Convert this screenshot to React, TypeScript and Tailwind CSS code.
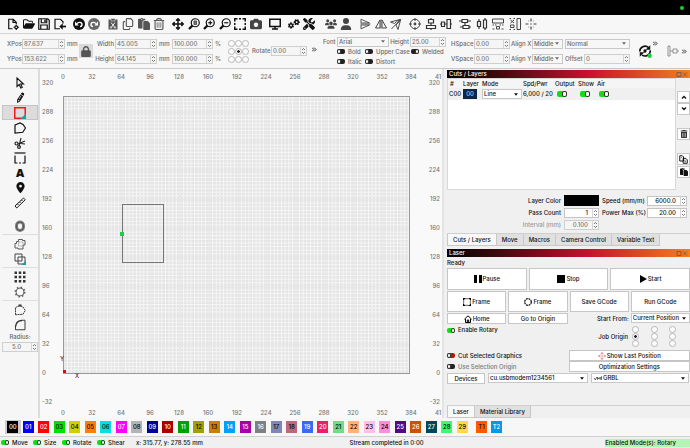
import type { ReactNode } from "react";
import clsx from "clsx";
import {
  FaArrowsUpDownLeftRight,
  FaCamera,
  FaGears,
  FaLocationDot,
  FaLock,
  FaPaste,
  FaPencil,
  FaRegCopy,
  FaRegFolderOpen,
  FaRegTrashCan,
  FaScrewdriverWrench,
  FaTrashCan,
  FaUser,
  FaUsers,
} from "react-icons/fa6";

const swatches = [
  { id: "00", bg: "bg-black", dark: true },
  { id: "01", bg: "bg-[#0000ff]", dark: true },
  { id: "02", bg: "bg-[#ff0000]", dark: true },
  { id: "03", bg: "bg-[#00e000]", dark: false },
  { id: "04", bg: "bg-[#d0d000]", dark: false },
  { id: "05", bg: "bg-[#ff8000]", dark: false },
  { id: "06", bg: "bg-[#00e0e0]", dark: false },
  { id: "07", bg: "bg-[#ff00ff]", dark: true },
  { id: "08", bg: "bg-[#b4b4b4]", dark: false },
  { id: "09", bg: "bg-[#0000a0]", dark: true },
  { id: "10", bg: "bg-[#a80000]", dark: true },
  { id: "11", bg: "bg-[#00a000]", dark: true },
  { id: "12", bg: "bg-[#a0a000]", dark: false },
  { id: "13", bg: "bg-[#c88000]", dark: false },
  { id: "14", bg: "bg-[#00a0ff]", dark: true },
  { id: "15", bg: "bg-[#a800a8]", dark: true },
  { id: "16", bg: "bg-[#808080]", dark: true },
  { id: "17", bg: "bg-[#7d87b9]", dark: false },
  { id: "18", bg: "bg-[#bb6a7c]", dark: false },
  { id: "19", bg: "bg-[#3a6af5]", dark: true },
  { id: "20", bg: "bg-[#f01e68]", dark: true },
  { id: "21", bg: "bg-[#6fdc86]", dark: false },
  { id: "22", bg: "bg-[#ffb27a]", dark: false },
  { id: "23", bg: "bg-[#ffc0e6]", dark: false },
  { id: "24", bg: "bg-[#ff8cd8]", dark: false },
  { id: "25", bg: "bg-[#500a82]", dark: true },
  { id: "26", bg: "bg-[#cc5200]", dark: true },
  { id: "27", bg: "bg-[#004754]", dark: true },
  { id: "28", bg: "bg-[#3cfa6e]", dark: false },
  { id: "29", bg: "bg-[#ffdb46]", dark: false },
];

function Svg({ children, className }: { children: ReactNode; className?: string }) {
  return (
    <svg viewBox="0 0 24 24" className={clsx("h-3 w-3", className)} fill="none" stroke="currentColor" strokeWidth="2.4">
      {children}
    </svg>
  );
}

const NewFile = () => (
  <Svg>
    <path d="M11 21.500H3.500v-19h9l6 6V12M12 2.500v6.500h6.500" />
    <circle cx="18.500" cy="18.500" r="2.800" />
    <path d="M18.500 13v2.500M18.500 21.500V24M13 18.500h2.500M21.500 18.500H24" />
  </Svg>
);
const SaveFile = () => (
  <Svg>
    <path d="M1.500 1.500h18l3 3v18h-21zM6.500 2v7.500h11V2M5.500 22v-8h13v8" />
    <path d="M14 3v5" strokeWidth="3" />
  </Svg>
);
const ImportFile = () => (
  <Svg>
    <path d="M18 11V7.500l-5-5H2v19h10" />
    <path d="M24 17h-8" strokeWidth="3.500" />
    <path d="M17.500 10.500v13L10.500 17z" fill="currentColor" stroke="none" />
  </Svg>
);
const Undo = ({ flip }: { flip?: boolean }) => (
  <Svg className={clsx(flip && "-scale-x-100 text-[#666]")}>
    <circle cx="12" cy="12" r="12" fill="currentColor" stroke="none" />
    <path d="M8 11.500c2-4 10-4 10 1.500 0 3-2 4-4 4" stroke="#fff" strokeWidth="2.800" />
    <path d="M4 7v8h7.500z" fill="#fff" stroke="none" />
  </Svg>
);
const CutBoard = () => (
  <Svg className="text-[#555]">
    <path d="M3 3h18v20H3z" fill="currentColor" stroke="none" />
    <path d="M8 1h8v5H8z" fill="currentColor" stroke="#f6f6f6" strokeWidth="1" />
    <path d="M8 9l7 9M16 9l-7 9" stroke="#fff" strokeWidth="1.800" />
    <circle cx="8" cy="19" r="1.500" stroke="#fff" strokeWidth="1.400" />
    <circle cx="16" cy="19" r="1.500" stroke="#fff" strokeWidth="1.400" />
  </Svg>
);
const Zoomer = ({ kind }: { kind: string }) => (
  <Svg>
    <circle cx="14.500" cy="9.500" r="8" />
    <path d="M9 15l-7 7" strokeWidth="4.500" />
    {kind === "page" && <path d="M12 6h5v7h-5z" fill="#777" stroke="#555" strokeWidth="2" />}
    {kind !== "page" && <path d="M10.500 9.500h8" strokeWidth="2.400" />}
    {kind === "in" && <path d="M14.500 5.500v8" strokeWidth="2.400" />}
  </Svg>
);
const Marquee = () => (
  <Svg>
    <path d="M1.500 7V1.500H7M10 1.500h4M17 1.500h5.500V7M22.500 10v4M22.500 17v5.500H17M14 22.500h-4M7 22.500H1.500V17M1.500 14v-4" strokeWidth="3" />
  </Svg>
);
const Monitor = () => (
  <Svg>
    <path d="M1.500 2.500h21v14.500h-21zM12 17v4M6 22h12" strokeWidth="3" />
  </Svg>
);
const MirrorV = () => (
  <Svg className="text-[#444]">
    <path d="M4 2.500L21 10H4zM4 21.500L21 14H4z" strokeWidth="1.800" />
    <path d="M2 12h21" strokeWidth="1.200" />
  </Svg>
);
const MirrorH = () => (
  <Svg className="text-[#444]">
    <path d="M10 4v16H1zM14 4v16h9z" strokeWidth="2" />
    <path d="M12 2v20" strokeWidth="1.200" />
  </Svg>
);
const MirrorLine = () => (
  <Svg className="text-[#444]">
    <path d="M1 8l19-5-7 4-4 4zM21 4l-5 19-4-9 4-4zM3 22L22 2" strokeWidth="1.900" />
  </Svg>
);
const Target = () => (
  <Svg className="text-[#444]">
    <circle cx="12" cy="12" r="9.500" strokeWidth="2" />
    <circle cx="12" cy="12" r="2.800" fill="currentColor" stroke="none" />
    <path d="M12 0v6M12 18v6M0 12h6M18 12h6" strokeWidth="2" />
  </Svg>
);
const AlignCol = () => (
  <Svg className="text-[#333]">
    <path d="M7 3h10v7H7zM3 15h18v6H3zM12 0v3M12 10v5M12 21v3" strokeWidth="2.400" />
  </Svg>
);
const AlignRow = () => (
  <Svg className="text-[#333]">
    <path d="M3 8h6v9H3zM14 3h7v18h-7zM0 12h3M9 12h5M21 12h3" strokeWidth="2.400" />
  </Svg>
);
const DistV = () => (
  <Svg className="text-[#333]">
    <path d="M6 3h11v6H6zM8 15h12v6H8zM0 6h6M17 6h7M12 9v6M2 18h6M20 18h4" strokeWidth="2.400" />
  </Svg>
);
const DistH = () => (
  <Svg className="text-[#333]">
    <path d="M3 7h6v10H3zM15 4h6v16h-6zM6 2v5M6 17v5M18 0v4M18 20v4" strokeWidth="2.400" />
  </Svg>
);
const SpaceV = () => (
  <Svg className="text-[#444]">
    <path d="M1 2h22v8H1z" strokeWidth="2" />
    <path d="M1 22h4M19 22h4M9 17h6v5H9zM1 14h3M6 14h3M15 14h3M20 14h3" strokeWidth="2" />
  </Svg>
);
const SpaceH = () => (
  <Svg className="text-[#444]">
    <path d="M16 1h7v22h-7z" strokeWidth="2" />
    <path d="M1 1h3M9 1h3M3 4l7 6M10 4l-7 6M3 14h7v5H3zM1 23h3M9 23h3" strokeWidth="2" />
  </Svg>
);
const CrossDots = ({ className }: { className?: string }) => (
  <Svg className={className}>
    <path d="M12 1v6M12 17v6M1 12h6M17 12h6" strokeWidth="2.400" />
    <path d="M10.500 12h3M6 6h1M17 6h1M6 18h1M17 18h1" strokeWidth="2.400" />
  </Svg>
);

const toolGroups: { width: string; color?: string; items: [string, ReactNode][] }[] = [
  {
    width: "w-[59px]",
    items: [
      ["New", <NewFile />],
      ["Open", <FaRegFolderOpen className="h-3 w-3" />],
      ["Save", <SaveFile />],
      ["Import", <ImportFile />],
    ],
  },
  { width: "w-[27px]", items: [["Undo", <Undo />], ["Redo", <Undo flip />]] },
  {
    width: "w-[58px]",
    color: "text-[#555]",
    items: [
      ["Cut", <CutBoard />],
      ["Copy", <FaRegCopy className="h-3 w-3" />],
      ["Paste", <FaPaste className="h-3 w-3" />],
      ["Delete", <FaRegTrashCan className="h-3 w-3" />],
    ],
  },
  {
    width: "w-[90px]",
    items: [
      ["Pan", <FaArrowsUpDownLeftRight className="h-3 w-3" />],
      ["Zoom to page", <Zoomer kind="page" />],
      ["Zoom in", <Zoomer kind="in" />],
      ["Zoom out", <Zoomer kind="out" />],
      ["Frame selection", <Marquee />],
      ["Camera", <FaCamera className="h-3 w-3 text-[#444]" />],
    ],
  },
  { width: "w-3", items: [["Preview", <Monitor />]] },
  {
    width: "w-[27px]",
    items: [
      ["Settings", <FaGears className="h-3 w-3 -scale-y-100" />],
      ["Device settings", <FaScrewdriverWrench className="h-3 w-3" />],
    ],
  },
  {
    width: "w-[30px] pl-[3px]",
    color: "text-[#444]",
    items: [
      ["Group", <FaUsers className="h-3 w-3" />],
      ["Ungroup", <FaUser className="h-3 w-3" />],
    ],
  },
  { width: "w-[43px]", items: [["Flip vertical", <MirrorV />], ["Flip horizontal", <MirrorH />], ["Mirror", <MirrorLine />]] },
  { width: "w-[43px]", items: [["Center", <Target />], ["Align centers", <AlignCol />], ["Align middles", <AlignRow />]] },
  {
    width: "w-[78px]",
    items: [
      ["Distribute vertical", <DistV />],
      ["Distribute horizontal", <DistH />],
      ["Space vertical", <SpaceV />],
      ["Space horizontal", <SpaceH />],
      ["Move to position", <CrossDots className="text-[#444]" />],
    ],
  },
];

function Spin({ id, value, className, right, disabled }: { id: string; value: string; className?: string; right?: boolean; disabled?: boolean }) {
  return (
    <span className={clsx("flex h-[10px] items-stretch border", disabled ? "border-[#cfcfcf] bg-[#f5f5f5] text-[#777]" : "border-[#c4c4c4] bg-white", className)}>
      <input id={id} defaultValue={value} className={clsx("w-full min-w-0 bg-transparent px-px outline-none", right && "pr-1 text-right")} />
      <span className="flex w-[6px] shrink-0 items-center justify-center border-l border-[#d4d4d4]">
        <svg viewBox="0 0 5 8" className="h-[8px] w-[5px]" fill="none" stroke="#555">
          <path d="M1 3l1.500-1.500L4 3M1 5l1.500 1.500L4 5" strokeWidth=".8" />
        </svg>
      </span>
    </span>
  );
}

function Select({ id, label, value, className, pad }: { id: string; label?: string; value: string; className?: string; pad?: string }) {
  return (
    <span className={clsx("relative flex h-[10px] items-center border border-[#c8c8c8]", className)}>
      <select id={id} aria-label={label} className={clsx("h-full w-full appearance-none bg-transparent outline-none", pad ?? "pl-px")}>
        <option>{value}</option>
      </select>
      <svg viewBox="0 0 6 4" className="pointer-events-none absolute right-[3px] h-[3px] w-1" fill="currentColor">
        <path d="M0 0h6L3 4z" />
      </svg>
    </span>
  );
}

const toggleTones = {
  green: "bg-[#12dd12]",
  red: "bg-[#c01010]",
  black: "bg-[#222]",
};

function Toggle({ label, name, on, dim, tone = "black", wide }: { label?: string; name?: string; on?: boolean; dim?: boolean; tone?: keyof typeof toggleTones; wide?: boolean }) {
  return (
    <label className={clsx("flex items-center gap-[3px]", dim && "text-[#777]")}>
      <input
        type="checkbox"
        aria-label={name}
        defaultChecked={on}
        className={clsx(
          "block shrink-0 appearance-none rounded-[2px] before:block before:h-full before:w-1/2 before:rounded-[2px] before:border before:border-[#333] before:bg-white checked:before:ml-auto",
          wide ? "h-[6px] w-[10px]" : "h-[5px] w-2",
          toggleTones[tone],
        )}
      />
      {label}
    </label>
  );
}

function RadioGrid({ name, checked, className }: { name: string; checked: number; className?: string }) {
  return (
    <div className={clsx("grid shrink-0 grid-cols-3", className)}>
      {Array.from({ length: 9 }, (_, i) => (
        <input
          key={i}
          type="radio"
          name={name}
          aria-label={`${name} ${i + 1}`}
          defaultChecked={i === checked}
          className="h-[7px] w-[7px] appearance-none rounded-full border border-[#b5b5b5] bg-white checked:bg-[radial-gradient(circle,#222_30%,#fff_45%)]"
        />
      ))}
    </div>
  );
}

const Chevrons = () => (
  <svg viewBox="0 0 8 8" className="h-[5px] w-[5px]" fill="none" stroke="#222" strokeWidth="1.500">
    <path d="M0 1l3 3-3 3M3.500 1l3 3-3 3" />
  </svg>
);

function PropertyBar() {
  return (
    <div className="flex h-[35px] items-center border-b border-[#c9c9c9] bg-[#f7f7f7] pl-[7px] text-[#6b6b6b]">
      <div className="grid grid-cols-[15px_43px_12px] items-center gap-y-[5px]">
        <label htmlFor="xpos">XPos</label>
        <Spin id="xpos" value="87.637" disabled />
        <span className="pl-[2px]">mm</span>
        <label htmlFor="ypos">YPos</label>
        <Spin id="ypos" value="153.622" disabled />
        <span className="pl-[2px]">mm</span>
      </div>
      <button aria-label="Lock aspect ratio" className="mx-[2px] flex h-[14px] w-[14px] items-center justify-center bg-[#d9d9d9]">
        <FaLock className="h-[11px] w-[10px] text-[#555]" />
      </button>
      <div className="grid grid-cols-[19px_43px_15px_41px_9px] items-center gap-y-[5px]">
        <label htmlFor="w" className="text-right">Width</label>
        <Spin id="w" value="45.005" disabled className="ml-px" />
        <span className="pl-[2px]">mm</span>
        <Spin id="wp" value="100.000" disabled />
        <label htmlFor="wp" className="pl-[2px]">%</label>
        <label htmlFor="h" className="text-right">Height</label>
        <Spin id="h" value="64.145" disabled className="ml-px" />
        <span className="pl-[2px]">mm</span>
        <Spin id="hp" value="100.000" disabled />
        <label htmlFor="hp" className="pl-[2px]">%</label>
      </div>
      <RadioGrid name="Anchor" checked={4} className="ml-[6px] w-[21px] gap-y-px" />
      <label htmlFor="rot" className="ml-[3px] w-[19px]">Rotate</label>
      <Spin id="rot" value="0.00" disabled className="w-[36px]" />
      <div className="mb-1 ml-[5px] w-[11px]"><Chevrons /></div>
      <div className="w-[123px] shrink-0">
        <div className="flex items-center">
          <label htmlFor="font" className="w-[14px]">Font</label>
          <Select id="font" value="Arial" className="w-[52px]" />
          <label htmlFor="fh" className="w-[20px] text-right">Height</label>
          <Spin id="fh" value="25.00" disabled className="ml-px w-[36px]" />
        </div>
        <div className="mt-px grid grid-cols-[28px_46px_34px] gap-y-[2px] whitespace-nowrap pl-[14px]">
          <Toggle label="Bold" />
          <Toggle label="Upper Case" />
          <Toggle label="Welded" on />
          <Toggle label="Italic" />
          <Toggle label="Distort" />
        </div>
      </div>
      <div className="ml-[5px] grid shrink-0 grid-cols-[23px_36px_22px_31px_67px] items-center gap-y-[5px]">
        <label htmlFor="hs">HSpace</label>
        <Spin id="hs" value="0.00" disabled />
        <label htmlFor="ax" className="pl-px whitespace-nowrap">Align X</label>
        <Select id="ax" value="Middle" />
        <Select id="ws" label="Style" value="Normal" className="ml-[2px]" />
        <label htmlFor="vs">VSpace</label>
        <Spin id="vs" value="0.00" disabled />
        <label htmlFor="ay" className="pl-px whitespace-nowrap">Align Y</label>
        <Select id="ay" value="Middle" />
        <div className="ml-[2px] flex items-center">
          <label htmlFor="off" className="w-[19px]">Offset</label>
          <Spin id="off" value="0" disabled className="flex-1" />
        </div>
      </div>
      <div className="ml-2 flex items-center">
        <button aria-label="Rotary setup">
          <svg viewBox="0 0 24 24" className="h-[14px] w-[14px]" fill="none" stroke="#111" strokeWidth="2.800">
            <path d="M3 13a9 9 0 0 1 15-7M21 11a9 9 0 0 1-14 8" />
            <path d="M21 2v8h-8zM3 22v-8h8z" fill="#111" stroke="none" />
            <circle cx="12" cy="12" r="2.800" fill="#111" stroke="none" />
            <circle cx="20" cy="20" r="3.800" fill="#14d23c" stroke="none" />
          </svg>
        </button>
        <div className="mb-[16px] ml-px"><Chevrons /></div>
      </div>
      <svg viewBox="0 0 12 12" className="ml-auto h-3 w-3 shrink-0" fill="none" stroke="#888">
        <path d="M1 1h2v10H1zM3 6h3M6 4h4v4H6zM10 6h2" strokeWidth=".9" />
      </svg>
      <div className="mx-[3px]"><Chevrons /></div>
    </div>
  );
}

const drawTools: [string, ReactNode][] = [
  [
    "Select",
    <Svg>
      <path d="M6 2v17l4.500-4 3 7 3-1.300-3-6.700H19z" strokeWidth="2.200" />
    </Svg>,
  ],
  ["Draw lines", <FaPencil className="h-[11px] w-[9px] -rotate-12" />],
  [
    "Rectangle",
    <Svg>
      <path d="M22.500 1.500v21h-21v-21z" stroke="#f01818" strokeWidth="3" />
      <path d="M24 13v11H13z" fill="#16a0a0" stroke="none" />
    </Svg>,
  ],
  [
    "Polygon",
    <Svg>
      <path d="M2 6l10-4 6 3 5 7-5.500 8.500L2 22z" />
    </Svg>,
  ],
  [
    "Trim",
    <Svg className="text-[#222]">
      <path d="M8 14L22 8M10 18L14 2M13 13l9 1" strokeWidth="2.200" />
      <circle cx="5" cy="13" r="3" />
      <circle cx="10" cy="20" r="2.800" />
    </Svg>,
  ],
  [
    "Tabs",
    <Svg>
      <path d="M1 2h22" />
      <path d="M2 7v15h5M10 22h4M17 22h5V7" />
    </Svg>,
  ],
  ["Text", <span className="text-[11px] font-black leading-3">A</span>],
  ["Position", <FaLocationDot className="h-[11px] w-[9px]" />],
  [
    "Measure",
    <Svg>
      <path d="M2 18L19 2l3.500 3.500L5.500 22zM7 14l2 2M11 10l2 2M15 6l2 2" strokeWidth="1.900" />
    </Svg>,
  ],
];

const moreTools: [string, ReactNode][][] = [
  [
    [
      "Weld",
      <Svg className="text-[#555]">
        <path d="M9 3h8v2h5v9h-4v8H8v-2H2v-9h3V7h4z" strokeWidth="1.900" />
        <path d="M9 8h9v7M9 8v8h9" strokeWidth="1.300" stroke="#999" />
      </Svg>,
    ],
    [
      "Boolean",
      <Svg className="text-[#444]">
        <path d="M2 2h14v14H2zM8 8h14v14H8z" strokeWidth="2" />
        <path d="M24 15v9h-9z" fill="#16a0a0" stroke="none" />
      </Svg>,
    ],
  ],
  [
    [
      "Grid array",
      <Svg className="text-[#333]">
        <path d="M1 3.500h22M1 12h22M1 20.500h22" strokeWidth="5" strokeDasharray="5 3.500" />
      </Svg>,
    ],
    [
      "Circular array",
      <Svg className="text-[#555]">
        <circle cx="12" cy="12" r="8" strokeWidth="1.800" />
        <circle cx="12" cy="12" r="9.500" strokeWidth="3" strokeDasharray="3 4.460" />
      </Svg>,
    ],
  ],
  [
    [
      "Edit nodes",
      <Svg className="text-[#333]">
        <path d="M3 21.500V7l9-4 6 3 4.500 7-4.500 7.500z" strokeWidth="1.900" strokeDasharray="4 1" />
        <path d="M9 1h6v4H9z" fill="currentColor" stroke="none" />
      </Svg>,
    ],
    [
      "Radius",
      <Svg className="text-[#333]">
        <path d="M3 15C4 8 8 3 16 3" strokeWidth="3" />
        <path d="M16 2.500h6v19H3V14" strokeWidth="1.900" />
      </Svg>,
    ],
  ],
];

function SideTools() {
  const cell = "flex h-[15px] w-full items-center justify-center";
  return (
    <aside className="w-10 shrink-0 border-r-2 border-[#dcdcdc] bg-[#f6f6f6] pt-[6px] pl-[2px]">
      {drawTools.map(([name, icon]) => (
        <button key={name} aria-label={name} className={clsx(cell, name === "Rectangle" && "border border-[#c4c4c4] bg-[#dcdcdc]")}>
          {icon}
        </button>
      ))}
      <button aria-label="Offset shapes" className={clsx(cell, "mt-2")}>
        <Svg className="text-[#808080]">
          <rect x="5" y="4" width="14" height="17" rx="7" strokeWidth="6" />
          <rect x="5" y="4" width="14" height="17" rx="7" strokeWidth="1.500" stroke="#444" />
        </Svg>
      </button>
      {moreTools.map((group, i) => (
        <div key={i} className="mt-px border-t border-[#dedede] pt-px">
          {group.map(([name, icon]) => (
            <button key={name} aria-label={name} className={cell}>
              {icon}
            </button>
          ))}
        </div>
      ))}
      <label htmlFor="radius" className="mt-px block text-center text-[#666]">Radius:</label>
      <Spin id="radius" value="5.0" disabled className="mt-px pl-2" />
    </aside>
  );
}

// 32 mm between labels, 29 px on screen
const xTicks = [0, 32, 64, 96, 128, 160, 192, 224, 256, 288, 320, 352, 384];
const yTicks = [320, 288, 256, 224, 192, 160, 128, 96, 64, 32, 0, -32];

function Workspace() {
  return (
    <main className="min-w-0 flex-1 overflow-hidden bg-[#f9f9f9]">
      <svg width="402" height="349" viewBox="40 69 402 349" fontSize="6" fill="#777">
        <defs>
          <pattern id="fine" x="63.500" y="373" width="3.625" height="3.625" patternUnits="userSpaceOnUse">
            <path d="M0 .5h3.625M.5 0v3.625" stroke="#f6f6f6" strokeWidth="1" />
          </pattern>
          <pattern id="major" x="63.500" y="373" width="29" height="29" patternUnits="userSpaceOnUse">
            <path d="M0 0h29M0 0v29" stroke="#dcdcdc" strokeWidth="1" />
          </pattern>
        </defs>
        <rect x="63.500" y="96.500" width="346" height="277" fill="#e4e4e4" />
        <rect x="63.500" y="96.500" width="346" height="277" fill="url(#fine)" />
        <rect x="63.500" y="96.500" width="346" height="277" fill="url(#major)" stroke="#999" />
        {xTicks.map((t, i) => (
          <g key={t} textAnchor="middle">
            <text x={63 + i * 29} y="79">{t}</text>
            <text x={63 + i * 29} y="415">{t}</text>
          </g>
        ))}
        <text x="435" y="79">41</text>
        <text x="435" y="415">41</text>
        {yTicks.map((t, i) => (
          <g key={t}>
            <text x="42" y={85 + i * 29}>{t}</text>
            <text x="440" y={85 + i * 29} textAnchor="end">{t}</text>
          </g>
        ))}
        <rect x="122.500" y="204.500" width="41" height="58" fill="none" stroke="#777" />
        <rect x="120" y="232" width="4" height="4" fill="#1fcf4a" />
        <rect x="63" y="370" width="3" height="3" fill="#d01010" />
        <text x="60" y="361" fill="#6b1c1c">Y</text>
        <text x="75" y="378" fill="#8a1c1c">X</text>
      </svg>
    </main>
  );
}

function DockTitle({ children }: { children: ReactNode }) {
  return (
    <h2 className="flex h-2 items-center justify-between bg-[linear-gradient(90deg,#000,#3a0a0c_20%,#c8102e_58%,#f08020)] pr-[2px] pl-[2px] text-white">
      {children}
      <svg viewBox="0 0 12 5" className="h-[5px] w-3" fill="none" stroke="#8a5a40">
        <path d="M1 .5h4v4H1zM7 .5l4 4M11 .5l-4 4" />
      </svg>
    </h2>
  );
}

function Tabs({ names }: { names: string[] }) {
  return (
    <div className="flex border-t border-[#cfcfcf]">
      {names.map((n, i) => (
        <button
          key={n}
          className={clsx("h-3 border-r border-b border-[#c8c8c8] px-[5px]", i === 0 ? "border-l bg-[#f8f8f8]" : "bg-[#e0e0e0]")}
        >
          {n}
        </button>
      ))}
    </div>
  );
}

const sideBtn = "flex h-3 w-[13px] items-center justify-center border border-[#c8c8c8] bg-white";

function CutsPanel() {
  return (
    <section>
      <DockTitle>Cuts / Layers</DockTitle>
      <div className="flex h-[112px]">
        <div className="flex-1 border border-[#d8d8d8] bg-white">
          <table className="w-full table-fixed text-left">
            <thead className="bg-[#f5f5f5]">
              <tr className="h-[9px]">
                <th className="w-[15px] pl-[2px] font-medium">#</th>
                <th className="w-[19px] font-medium">Layer</th>
                <th className="w-[41px] font-medium">Mode</th>
                <th className="w-[32px] font-medium">Spd/Pwr</th>
                <th className="w-[23px] font-medium">Output</th>
                <th className="w-[19px] font-medium">Show</th>
                <th className="font-medium">Air</th>
              </tr>
            </thead>
            <tbody>
              <tr className="h-3 bg-[#f0f0f0]">
                <td className="pl-px">C00</td>
                <td>
                  <div className="h-[10px] w-[14px] bg-[#0c2848] text-center leading-[10px] text-[#a8c8f0]">00</div>
                </td>
                <td>
                  <Select id="mode" label="Mode" value="Line" className="w-[40px] bg-white" />
                </td>
                <td className="whitespace-nowrap">6,000 / 20</td>
                <td className="pl-[2px]"><Toggle name="Output" on wide tone="green" /></td>
                <td className="pl-[2px]"><Toggle name="Show" on wide tone="green" /></td>
                <td className="pl-[2px]"><Toggle name="Air" on wide tone="green" /></td>
              </tr>
            </tbody>
          </table>
        </div>
        <div className="flex w-[14px] flex-col items-end pt-[13px]">
          <button aria-label="Move up" className={sideBtn}>
            <svg viewBox="0 0 6 4" className="h-1 w-[6px]" fill="none" stroke="#111" strokeWidth="1.300"><path d="M1 3.500l2-2 2 2" /></svg>
          </button>
          <button aria-label="Move down" className={sideBtn}>
            <svg viewBox="0 0 6 4" className="h-1 w-[6px]" fill="none" stroke="#111" strokeWidth="1.300"><path d="M1 .5l2 2 2-2" /></svg>
          </button>
          <button aria-label="Delete layer" className={clsx(sideBtn, "mt-[13px]")}><FaTrashCan className="h-2 w-2 text-[#333]" /></button>
          <button aria-label="Copy layer" className={clsx(sideBtn, "mt-[13px]")}>
            <Svg className="!h-[9px] !w-[9px]">
              <path d="M2 2h7l3 3v11H2zM11 9h7l4 4v9H11z" strokeWidth="2.600" fill="#fff" />
              <path d="M14 14h4M14 18h5M5 7h3" strokeWidth="1.600" />
            </Svg>
          </button>
          <button aria-label="Paste layer" className={clsx(sideBtn, "mt-px")}><FaPaste className="h-2 w-2" /></button>
        </div>
      </div>
      <div className="grid grid-cols-[1fr_35px_42px_40px] items-center gap-x-[3px] gap-y-[2px] pt-[5px] pr-[3px] pb-[3px] text-right whitespace-nowrap">
        <span>Layer Color</span>
        <button aria-label="Layer color" className="h-[11px] bg-black" />
        <label htmlFor="speed">Speed (mm/m)</label>
        <Spin id="speed" value="6000.0" right />
        <label htmlFor="pass">Pass Count</label>
        <Spin id="pass" value="1" right />
        <label htmlFor="power">Power Max (%)</label>
        <Spin id="power" value="20.00" right />
        <label htmlFor="interval" className="text-[#999]">Interval (mm)</label>
        <Spin id="interval" value="0.100" right disabled />
      </div>
      <Tabs names={["Cuts / Layers", "Move", "Macros", "Camera Control", "Variable Text"]} />
    </section>
  );
}

const btn = "flex items-center justify-center gap-px border border-[#c6c6c6] bg-white whitespace-nowrap";

function LaserPanel() {
  return (
    <section className="mt-[3px] flex flex-1 flex-col">
      <DockTitle>Laser</DockTitle>
      <p className="pt-[2px] pb-px">Ready</p>
      <div className="grid grid-cols-3 gap-[2px]">
        <button className={clsx(btn, "h-[22px]")}>
          <svg viewBox="0 0 8 8" className="h-2 w-2"><path d="M0 0h3v8H0zM5 0h3v8H5z" /></svg>Pause
        </button>
        <button className={clsx(btn, "h-[22px]")}>
          <svg viewBox="0 0 8 8" className="h-2 w-2"><path d="M0 0h8v8H0z" /></svg>Stop
        </button>
        <button className={clsx(btn, "h-[22px]")}>
          <svg viewBox="0 0 8 8" className="h-2 w-2"><path d="M1 0l7 4-7 4z" /></svg>Start
        </button>
      </div>
      <div className="mt-px grid grid-cols-4 gap-x-[2px] gap-y-px">
        <button className={clsx(btn, "h-[21px]")}>
          <svg viewBox="0 0 8 8" className="h-2 w-2" fill="none" stroke="#000" strokeWidth="1.200"><path d="M.6 2.500V.6h2M3.500.6h1M5.500.6h2v2M7.400 3.500v1M7.400 5.500v2h-2M4.500 7.400h-1M2.500 7.400h-2v-2M.6 4.500v-1" /></svg>Frame
        </button>
        <button className={clsx(btn, "h-[21px]")}>
          <svg viewBox="0 0 8 8" className="h-2 w-2" fill="none" stroke="#000" strokeWidth="1.200"><circle cx="4" cy="4" r="3.300" strokeDasharray="1.900 .7" /></svg>Frame
        </button>
        <button className={clsx(btn, "h-[21px]")}>Save GCode</button>
        <button className={clsx(btn, "h-[21px]")}>Run GCode</button>
        <button className={clsx(btn, "h-[11px]")}>
          <svg viewBox="0 0 8 8" className="h-2 w-2" fill="none" stroke="#000"><path d="M.4 4.200L4 .8l3.600 3.400M1.500 4v3.500h5V4M3.300 7.500V5h1.400v2.500" /></svg>Home
        </button>
        <button className={clsx(btn, "h-[11px]")}>Go to Origin</button>
        <label htmlFor="start" className="self-center text-right">Start From:</label>
        <Select id="start" value="Current Position" className="bg-white" />
      </div>
      <div className="flex h-[26px] items-start justify-between pt-[2px]">
        <Toggle label="Enable Rotary" on tone="green" />
        <div className="flex items-center gap-1 pr-[2px]">
          <span>Job Origin</span>
          <RadioGrid name="Job Origin" checked={3} className="w-[56px]" />
        </div>
      </div>
      <div className="grid grid-cols-2 items-center">
        <Toggle label="Cut Selected Graphics" tone="red" />
        <button className={clsx(btn, "h-[11px]")}>
          <CrossDots className="!h-2 !w-2 text-[#c01010]" />Show Last Position
        </button>
        <Toggle label="Use Selection Origin" dim />
        <button className={clsx(btn, "h-[11px]")}>Optimization Settings</button>
      </div>
      <div className="mt-px flex gap-[3px] pr-px">
        <button className={clsx(btn, "h-[11px] w-[38px]")}>Devices</button>
        <Select id="port" label="Port" value="cu.usbmodem1234561" className="flex-1 bg-white" />
        <span className="relative flex flex-1">
          <Select id="ctl" label="Controller" value="GRBL" className="w-full bg-white" pad="pl-[11px]" />
          <svg viewBox="0 0 9 5" className="pointer-events-none absolute top-[3px] left-[3px] h-[5px] w-2" fill="none" stroke="#333">
            <path d="M0 2l1.500 2L3 1M4 4V1l1.500 2L7 1v3M8.500 0v4" strokeWidth=".9" />
          </svg>
        </span>
      </div>
      <div className="mt-auto">
        <Tabs names={["Laser", "Material Library"]} />
      </div>
    </section>
  );
}

export default function App() {
  return (
    <div className="flex min-h-screen w-full flex-col overflow-hidden bg-[#f0f0f0] font-['Inter',sans-serif] text-[6px] leading-2 font-medium text-[#111]">
      <div className="flex h-[15px] items-center justify-end bg-black pr-[6px]">
        <span className="h-1 w-1 rounded-full bg-[#1fd01f]" />
      </div>
      <nav className="flex h-[19px] items-center gap-[7px] border-b border-[#d2d2d2] bg-[#f7f7f7] pl-[7px]">
        {toolGroups.map((g, i) => (
          <div key={i} className={clsx("flex shrink-0 items-center justify-between", g.width, g.color)}>
            {g.items.map(([name, icon]) => (
              <button key={name} aria-label={name} className="w-3">
                {icon}
              </button>
            ))}
          </div>
        ))}
      </nav>
      <PropertyBar />
      <div className="flex flex-1">
        <SideTools />
        <Workspace />
        <div className="flex w-[248px] shrink-0 flex-col border-l-2 border-[#e4e4e4] pt-px pl-[3px]">
          <CutsPanel />
          <LaserPanel />
        </div>
      </div>
      <div className="flex h-[19px] items-center border-b border-[#cfcfcf] bg-[#f7f7f7] pl-[5px] text-center">
        <div className="grid w-[465px] grid-cols-[repeat(30,minmax(0,1fr))]">
          {swatches.map((s, i) => (
            <div key={s.id} className={clsx("flex h-[14px] items-center justify-center", i === 0 && "bg-[#ccc]")}>
              <button className={clsx("h-3 w-[11px]", s.bg, s.dark ? "text-white" : "text-black")}>{s.id}</button>
            </div>
          ))}
        </div>
        <button className="ml-[6px] h-3 w-[11px] bg-[#ff5a00]">T1</button>
        <button className="ml-1 h-3 w-[11px] bg-[#0a96e6] text-white">T2</button>
      </div>
      <footer className="flex h-[11px] items-center bg-[#f0f0f0] pl-px">
        <div className="grid w-1/2 grid-cols-[32px_29px_35px_39px_1fr] items-center whitespace-nowrap">
          <Toggle label="Move" on tone="green" />
          <Toggle label="Size" on tone="green" />
          <Toggle label="Rotate" on tone="green" />
          <Toggle label="Shear" on tone="green" />
          <span>x: 315.77, y: 278.55 mm</span>
        </div>
        <span className="pl-1">Stream completed in 0:00</span>
        <span className="ml-auto bg-[#b4f5b4] pr-[14px]">Enabled Mode(s): Rotary</span>
      </footer>
    </div>
  );
}
